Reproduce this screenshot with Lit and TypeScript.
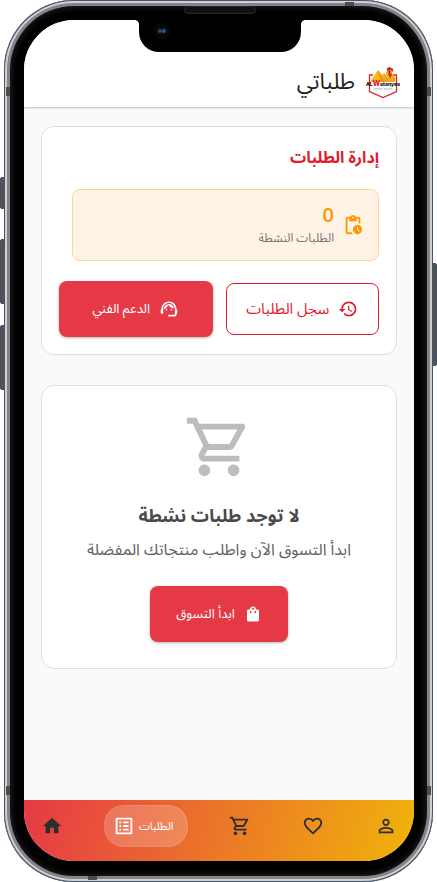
import { LitElement, html, css, svg } from "lit";
import { customElement, property } from "lit/decorators.js";

const icons: Record<string, string> = {
  home: "M10 20v-6h4v6h5v-8h3L12 3 2 12h3v8z",
  list: "M19 5v14H5V5h14m1.1-2H3.9c-.5 0-.9.4-.9.9v16.2c0 .4.4.9.9.9h16.2c.4 0 .9-.5.9-.9V3.9c0-.5-.5-.9-.9-.9zM11 7h6v2h-6V7zm0 4h6v2h-6v-2zm0 4h6v2h-6zM7 7h2v2H7zm0 4h2v2H7zm0 4h2v2H7z",
  cart: "M15.55 13c.75 0 1.41-.41 1.75-1.03l3.58-6.49c.37-.66-.11-1.48-.87-1.48H5.21l-.94-2H1v2h2l3.6 7.59-1.35 2.44C4.52 15.37 5.48 17 7 17h12v-2H7l1.1-2h7.45zM6.16 6h12.15l-2.76 5H8.53L6.16 6zM7 18c-1.1 0-1.99.9-1.99 2S5.9 22 7 22s2-.9 2-2-.9-2-2-2zm10 0c-1.1 0-1.99.9-1.99 2s.89 2 1.99 2 2-.9 2-2-.9-2-2-2z",
  heart: "M16.5 3c-1.74 0-3.41.81-4.5 2.09C10.91 3.81 9.24 3 7.5 3 4.42 3 2 5.42 2 8.5c0 3.78 3.4 6.86 8.55 11.54L12 21.35l1.45-1.32C18.6 15.36 22 12.28 22 8.5 22 5.42 19.58 3 16.5 3zm-4.4 15.55l-.1.1-.1-.1C7.14 14.24 4 11.39 4 8.5 4 6.5 5.5 5 7.5 5c1.54 0 3.04.99 3.57 2.36h1.87C13.46 5.99 14.96 5 16.5 5c2 0 3.5 1.5 3.5 3.5 0 2.89-3.14 5.74-7.9 10.05z",
  person: "M12 5.9c1.16 0 2.1.94 2.1 2.1s-.94 2.1-2.1 2.1S9.9 9.16 9.9 8s.94-2.1 2.1-2.1m0 9c2.97 0 6.1 1.46 6.1 2.1v1.1H5.9V17c0-.64 3.13-2.1 6.1-2.1M12 4C9.79 4 8 5.79 8 8s1.79 4 4 4 4-1.79 4-4-1.79-4-4-4zm0 9c-2.67 0-8 1.34-8 4v3h16v-3c0-2.66-5.33-4-8-4z",
  pending: "M17 12c-2.76 0-5 2.24-5 5s2.24 5 5 5 5-2.24 5-5-2.24-5-5-5zm1.65 7.35L16.5 17.2V14h1v2.79l1.85 1.85-.7.71zM18 3h-3.18C14.4 1.84 13.3 1 12 1s-2.4.84-2.82 2H6c-1.1 0-2 .9-2 2v15c0 1.1.9 2 2 2h6.11c-.59-.57-1.07-1.25-1.42-2H6V5h2v3h8V5h2v5.08c.71.1 1.38.31 2 .6V5c0-1.1-.9-2-2-2zm-6 2c-.55 0-1-.45-1-1s.45-1 1-1 1 .45 1 1-.45 1-1 1z",
  history: "M13 3c-4.97 0-9 4.03-9 9H1l3.89 3.89.07.14L9 12H6c0-3.87 3.13-7 7-7s7 3.13 7 7-3.13 7-7 7c-1.93 0-3.68-.79-4.94-2.06l-1.42 1.42C8.27 19.99 10.51 21 13 21c4.97 0 9-4.03 9-9s-4.03-9-9-9zm-1 5v5l4.28 2.54.72-1.21-3.5-2.08V8H12z",
  support: "M21 12.22C21 6.73 16.74 3 12 3c-4.69 0-9 3.65-9 9.28-.6.34-1 .98-1 1.72v2c0 1.1.9 2 2 2h1v-6.1c0-3.87 3.13-7 7-7s7 3.13 7 7V19h-8v2h8c1.1 0 2-.9 2-2v-1.22c.59-.31 1-.92 1-1.64v-2.3c0-.7-.41-1.31-1-1.62zM8 13a1 1 0 1 0 2 0 1 1 0 1 0-2 0zM14 13a1 1 0 1 0 2 0 1 1 0 1 0-2 0zM18 11.03C17.52 8.18 15.04 6 12.05 6c-3.03 0-6.29 2.51-6.03 6.45 2.47-1.01 4.33-3.21 4.86-5.89 1.31 2.63 4 4.44 7.12 4.47z",
  bag: "M18 6h-2c0-2.21-1.79-4-4-4S8 3.79 8 6H6c-1.1 0-2 .9-2 2v12c0 1.1.9 2 2 2h12c1.1 0 2-.9 2-2V8c0-1.1-.9-2-2-2zm-8 4c0 .55-.45 1-1 1s-1-.45-1-1V8h2v2zm2-6c1.1 0 2 .9 2 2h-4c0-1.1.9-2 2-2zm4 6c0 .55-.45 1-1 1s-1-.45-1-1V8h2v2z",
};

@customElement("ui-icon")
class UiIcon extends LitElement {
  @property() name = "home";
  static styles = css`
    :host { display: block; flex: none; width: 20px; height: 20px; }
    svg { display: block; width: 100%; height: 100%; fill: currentColor; }
  `;
  render() {
    return html`<svg viewBox="0 0 24 24" aria-hidden="true">${svg`<path d=${icons[this.name]} />`}</svg>`;
  }
}

@customElement("brand-logo")
class BrandLogo extends LitElement {
  static styles = css`
    :host { display: block; flex: none; width: 34px; height: 34px; }
    svg { display: block; width: 100%; height: 100%; direction: ltr; }
    text { font-family: Inter, "Liberation Sans", sans-serif; }
    .name { font-size: 5px; font-weight: 800; fill: #111; }
    .tag { font-size: 2px; fill: #999; }
    .accent { font-size: 7px; fill: #e0142a; }
  `;
  render() {
    return html`<svg viewBox="0 0 34 34" role="img" aria-label="ALWatanyea">
      <path d="M7 10H3.500V26.500L17 32.500L30.500 26.500V10H27" fill="none" stroke="#e5202c" stroke-width="1.300" />
      <path d="M4 17L12 5L16 10L18 8L24 17Z" fill="#f8b61a" />
      <path d="M12 5L15 17H19Z" fill="#e39512" />
      <path d="M18 8L20 17H24Z" fill="#e39512" />
      <path d="M20 10Q20 4 23 4Q27 4 26 9Q31 12 29 17H20Q24 14 20 10Z" fill="#f9a51b" />
      <path d="M21 5Q20 2 22 3Q24 1 25 3Q28 3 27 7L25 5L22 6Z" fill="#dc2020" />
      <path d="M22 8L26 9L24 13Z" fill="#c91e1e" />
      <circle cx="23.500" cy="7" r="0.900" fill="#222" />
      <text class="name" x="17" y="21" text-anchor="middle">AL<tspan class="accent">W</tspan>atanyea</text>
      <text class="tag" x="17" y="25" text-anchor="middle">Veterinary Medicine</text>
    </svg>`;
  }
}

@customElement("app-root")
class AppRoot extends LitElement {
  static styles = css`
    :host {
      display: block;
      font-family: "Noto Sans Arabic", "DejaVu Sans", sans-serif;
      background: #fff;
      color: #333;
    }
    * { box-sizing: border-box; }
    h1, h2, p { margin: 0; font-weight: 400; }
    .stage { position: relative; padding: 0 4px; min-height: 100vh; display: flex; }
    .key { position: absolute; width: 6px; background: #55524f; border: 1px solid #46505e; border-radius: 2px; }
    .key.silent { left: 0; top: 177px; height: 32px; }
    .key.up { left: 0; top: 239px; height: 65px; }
    .key.down { left: 0; top: 325px; height: 65px; }
    .key.power { right: 0; top: 263px; height: 103px; }
    .phone {
      position: relative;
      flex: 1;
      min-width: 0;
      display: flex;
      padding: 20px 19px 21px 20px;
      border-radius: 70px;
      background: #000;
      box-shadow: inset 0 0 0 1px #405570, inset 0 0 0 3px #d0d0d3, inset 0 0 0 6px #868384, inset 0 0 6px 7px #252525;
    }
    .band { position: absolute; background: #514b49; }
    .band.lt { left: 2px; top: 87px; width: 4px; height: 9px; }
    .band.rt { right: 2px; top: 87px; width: 4px; height: 9px; }
    .band.lb { left: 2px; bottom: 87px; width: 4px; height: 9px; }
    .band.rb { right: 2px; bottom: 87px; width: 4px; height: 9px; }
    .band.top { right: 79px; top: 2px; width: 9px; height: 4px; }
    .band.bottom { left: 84px; bottom: 2px; width: 9px; height: 4px; }
    .notch {
      position: absolute;
      top: 18px;
      left: 50%;
      width: 162px;
      height: 34px;
      margin-left: -80px;
      background: #000;
      border-radius: 0 0 20px 20px;
    }
    .notch::before, .notch::after {
      content: "";
      position: absolute;
      top: 2px;
      width: 3px;
      height: 3px;
    }
    .notch::before { left: -3px; background: radial-gradient(circle at 0 100%, transparent 2px, #000 3px); }
    .notch::after { right: -3px; background: radial-gradient(circle at 100% 100%, transparent 2px, #000 3px); }
    .speaker {
      position: absolute;
      top: 6px;
      left: 50%;
      width: 72px;
      height: 8px;
      margin-left: -35px;
      border-radius: 4px;
      background: #111;
      border: 1px solid #272727;
    }
    .camera {
      position: absolute;
      left: 15px;
      top: 5px;
      width: 16px;
      height: 16px;
      border-radius: 50%;
      background: radial-gradient(circle at 10px 8px, #3450ae 1px, transparent 3px), radial-gradient(circle at 6px 8px, #20546c 1px, transparent 3px), #080808;
    }
    .screen {
      flex: 1;
      min-width: 0;
      display: flex;
      flex-direction: column;
      background: #f8fafc;
      border-radius: 50px;
      overflow: hidden;
    }
    header {
      display: flex;
      align-items: center;
      gap: 11px;
      padding: 44px 14px 8px;
      height: 87px;
      background: #fff;
      box-shadow: 0 1px 2px rgba(0, 0, 0, 0.24);
    }
    h1 { font-size: 22px; line-height: 32px; color: #222; }
    main { flex: 1; display: flex; flex-direction: column; gap: 30px; padding: 19px 17px; }
    .card { background: #fff; border: 1px solid #dedfe1; border-radius: 13px; padding: 17px; }
    .manage h2 { font-size: 16px; line-height: 28px; font-weight: 700; color: #e01b2e; }
    .stat {
      display: flex;
      align-items: center;
      gap: 8px;
      margin: 17px 0 20px 13px;
      padding: 0 14px;
      height: 72px;
      border: 1px solid #fcd699;
      border-radius: 8px;
      background: #fff3e6;
    }
    .stat ui-icon { width: 22px; height: 22px; color: #ff9800; }
    .count { font-family: "Open Sans", sans-serif; font-size: 20px; line-height: 28px; font-weight: 600; color: #ff9800; }
    .label { font-size: 12px; line-height: 20px; color: #757575; }
    .actions { display: grid; grid-template-columns: 1fr 1fr; gap: 13px; align-items: center; }
    button {
      display: flex;
      align-items: center;
      justify-content: center;
      gap: 9px;
      margin: 0;
      padding: 0 26px;
      font-family: inherit;
      border-radius: 8px;
      cursor: pointer;
      white-space: nowrap;
    }
    .outline { height: 52px; padding: 0 8px; border: 1px solid #e01b2e; background: #fff; color: #e01b2e; font-size: 15px; }
    .filled {
      height: 56px;
      border: 0;
      background: #e63946;
      color: #fff;
      font-size: 13px;
      box-shadow: 0 1px 3px rgba(0, 0, 0, 0.3);
    }
    .empty { display: flex; flex-direction: column; align-items: center; padding: 26px 17px; text-align: center; }
    .empty .big { width: 70px; height: 70px; color: #bdbdbd; }
    .empty h2 { margin-top: 18px; font-size: 18px; line-height: 32px; font-weight: 700; color: #4a4a4a; }
    .empty p { margin: 4px 0 22px; font-size: 16px; line-height: 28px; color: #616161; }
    .bag { width: 18px; height: 18px; }
    nav {
      direction: ltr;
      display: flex;
      align-items: flex-start;
      justify-content: space-between;
      height: 61px;
      padding: 5px 7px;
      background: linear-gradient(105deg, #e63946, #f0b40a);
    }
    nav a {
      display: flex;
      align-items: center;
      justify-content: center;
      width: 42px;
      height: 42px;
      color: #2e2e2e;
      text-decoration: none;
    }
    nav ui-icon { width: 22px; height: 22px; }
    nav .active {
      width: auto;
      gap: 4px;
      padding: 0 14px 0 8px;
      border: 1px solid rgba(255, 255, 255, 0.1);
      border-radius: 20px;
      background: rgba(255, 255, 255, 0.2);
      color: #fff;
      font-size: 11px;
    }
  `;

  render() {
    return html`
      <div class="stage">
        <span class="key silent"></span>
        <span class="key up"></span>
        <span class="key down"></span>
        <span class="key power"></span>
        <div class="phone">
          ${["lt", "rt", "lb", "rb", "top", "bottom"].map((side) => html`<span class="band ${side}"></span>`)}
          <div class="screen" dir="rtl">
            <header>
              <brand-logo></brand-logo>
              <h1>طلباتي</h1>
            </header>
            <main>
              <section class="card manage">
                <h2>إدارة الطلبات</h2>
                <div class="stat">
                  <ui-icon name="pending"></ui-icon>
                  <div>
                    <p class="count">0</p>
                    <p class="label">الطلبات النشطة</p>
                  </div>
                </div>
                <div class="actions">
                  <button class="outline"><ui-icon name="history"></ui-icon>سجل الطلبات</button>
                  <button class="filled"><ui-icon name="support"></ui-icon>الدعم الفني</button>
                </div>
              </section>
              <section class="card empty">
                <ui-icon class="big" name="cart"></ui-icon>
                <h2>لا توجد طلبات نشطة</h2>
                <p>ابدأ التسوق الآن واطلب منتجاتك المفضلة</p>
                <button class="filled"><ui-icon class="bag" name="bag"></ui-icon>ابدأ التسوق</button>
              </section>
            </main>
            <nav>
              <a href="#home" aria-label="الرئيسية"><ui-icon name="home"></ui-icon></a>
              <a class="active" href="#orders" aria-current="page"><ui-icon name="list"></ui-icon>الطلبات</a>
              <a href="#cart" aria-label="السلة"><ui-icon name="cart"></ui-icon></a>
              <a href="#favorites" aria-label="المفضلة"><ui-icon name="heart"></ui-icon></a>
              <a href="#profile" aria-label="الحساب"><ui-icon name="person"></ui-icon></a>
            </nav>
          </div>
          <div class="notch"><span class="camera"></span></div>
          <span class="speaker"></span>
        </div>
      </div>
    `;
  }
}
